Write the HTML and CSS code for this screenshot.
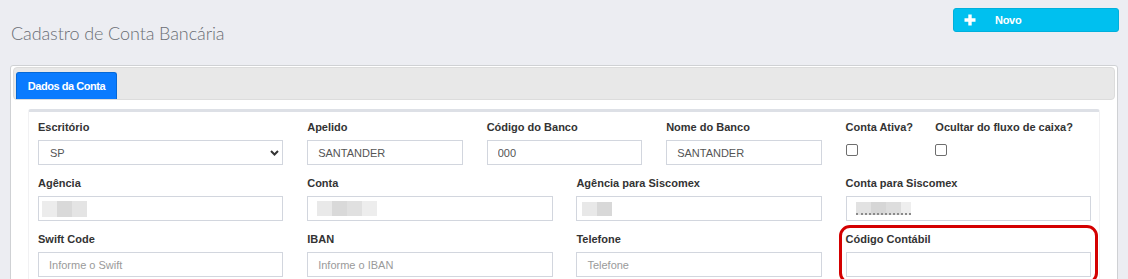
FILE: index.html
```html
<!DOCTYPE html>
<html lang="pt-BR">
<head>
<meta charset="utf-8">
<title>Cadastro de Conta Bancária</title>
<link rel="stylesheet" href="styles.css">
</head>
<body>
<header class="page-header">
  <h1 class="page-title">Cadastro de Conta Bancária</h1>
  <button class="btn-novo" type="button">
    <svg class="btn-icon" width="12" height="12" viewBox="0 0 12 12" aria-hidden="true"><path d="M6 0.5V11.5M0.5 6H11.5" stroke="#fff" stroke-width="3.4"/></svg>
    <span class="btn-label">Novo</span>
  </button>
</header>

<section class="panel">
  <nav class="tabbar">
    <a class="tab tab-active" href="#">Dados da Conta</a>
  </nav>
  <div class="box">
    <form class="form-grid">
      <div class="field span-3">
        <label class="lbl">Escritório</label>
        <div class="select-wrap">
          <select class="ctl select"><option>SP</option></select>
          <svg class="chev" width="9" height="6" viewBox="0 0 9 6" aria-hidden="true"><path d="M1 1L4.5 4.5L8 1" fill="none" stroke="#333" stroke-width="2"/></svg>
        </div>
      </div>
      <div class="field span-2">
        <label class="lbl">Apelido</label>
        <input class="ctl" value="SANTANDER">
      </div>
      <div class="field span-2">
        <label class="lbl">Código do Banco</label>
        <input class="ctl" value="000">
      </div>
      <div class="field span-2">
        <label class="lbl">Nome do Banco</label>
        <input class="ctl" value="SANTANDER">
      </div>
      <div class="field span-1">
        <label class="lbl">Conta Ativa?</label>
        <input class="chk" type="checkbox">
      </div>
      <div class="field span-2">
        <label class="lbl">Ocultar do fluxo de caixa?</label>
        <input class="chk" type="checkbox">
      </div>

      <div class="field span-3">
        <label class="lbl">Agência</label>
        <div class="ctl masked"><span class="mosaic m-ag"></span></div>
      </div>
      <div class="field span-3">
        <label class="lbl">Conta</label>
        <div class="ctl masked"><span class="mosaic m-conta"></span></div>
      </div>
      <div class="field span-3">
        <label class="lbl">Agência para Siscomex</label>
        <div class="ctl masked"><span class="mosaic m-agsis"></span></div>
      </div>
      <div class="field span-3">
        <label class="lbl">Conta para Siscomex</label>
        <div class="ctl masked"><span class="mosaic m-contasis"></span></div>
      </div>

      <div class="field span-3">
        <label class="lbl">Swift Code</label>
        <input class="ctl" placeholder="Informe o Swift">
      </div>
      <div class="field span-3">
        <label class="lbl">IBAN</label>
        <input class="ctl" placeholder="Informe o IBAN">
      </div>
      <div class="field span-3">
        <label class="lbl">Telefone</label>
        <input class="ctl" placeholder="Telefone">
      </div>
      <div class="field span-3 highlight">
        <label class="lbl">Código Contábil</label>
        <input class="ctl">
      </div>
    </form>
  </div>
</section>
</body>
</html>
```

FILE: styles.css
```css
* { box-sizing: border-box; }

html, body {
  margin: 0;
  padding: 0;
  background: #ecedf2;
  font-family: "Liberation Sans", Arial, sans-serif;
  overflow: hidden;
}

.page-header {
  display: flex;
  justify-content: space-between;
  align-items: flex-start;
  padding: 8px 9px 0 11px;
}

.page-title {
  margin: 13px 0 0;
  font-family: Lato, "Open Sans", sans-serif;
  font-weight: 300;
  font-size: 18px;
  line-height: 24px;
  letter-spacing: -0.1px;
  color: #6a6e75;
}

.btn-novo {
  display: flex;
  align-items: center;
  width: 166px;
  height: 24px;
  padding: 0 0 0 10px;
  background: #00c0ef;
  border: 1px solid #00b0dc;
  border-radius: 3px;
  color: #fff;
  font-family: "Liberation Sans", Arial, sans-serif;
  font-size: 11px;
  cursor: pointer;
}

.btn-icon { display: block; }

.btn-label {
  margin-left: 19px;
  font-weight: bold;
  letter-spacing: -0.3px;
}

.panel {
  margin: 20px 10px 0 10px;
  background: #fff;
  border: 1px solid #cfd1d4;
  border-radius: 3px;
  padding: 1px 2px 0;
}

.tabbar {
  display: flex;
  background: #e8e8e8;
  border: 1px solid #dcdcdc;
  border-radius: 4px;
  padding: 4px 2px 0;
  height: 33px;
}

.tab {
  display: flex;
  align-items: center;
  justify-content: center;
  height: 27px;
  padding: 0;
  font-size: 11px;
  font-weight: bold;
  letter-spacing: -0.45px;
  white-space: nowrap;
  color: #fff;
  text-decoration: none;
}

.tab-active {
  background: #0a7bff;
  border: 1px solid #0568d6;
  border-bottom: 0;
  border-radius: 3px 3px 0 0;
  width: 101px;
}

.box {
  margin: 9px 15px 0;
  border-top: 3px solid #dde0e6;
  border-left: 1px solid #f1f1f3;
  border-right: 1px solid #f1f1f3;
  border-radius: 3px 3px 0 0;
  padding: 8px 8px 20px 9px;
}

.form-grid {
  display: grid;
  grid-template-columns: repeat(12, 1fr);
  column-gap: 23.8px;
  row-gap: 11px;
}

.span-1 { grid-column: span 1; }
.span-2 { grid-column: span 2; }
.span-3 { grid-column: span 3; }

.field {
  display: flex;
  flex-direction: column;
  align-items: flex-start;
  min-width: 0;
}

.lbl {
  font-size: 11px;
  font-weight: bold;
  line-height: 15px;
  color: #333;
  margin-bottom: 5px;
  white-space: nowrap;
}

.ctl {
  width: 100%;
  height: 25px;
  margin: 0;
  padding: 0 10px;
  border: 1px solid #d2d6de;
  border-radius: 0;
  background: #fff;
  font-family: "Liberation Sans", Arial, sans-serif;
  font-size: 11px;
  color: #555;
  outline: none;
}

.ctl::placeholder { color: #9a9a9a; }

.select-wrap {
  position: relative;
  width: 100%;
}

.select {
  appearance: none;
  -webkit-appearance: none;
  padding-left: 11px;
  display: block;
}

.chev {
  position: absolute;
  right: 4px;
  top: 10px;
}

.chk {
  appearance: none;
  -webkit-appearance: none;
  width: 12px;
  height: 12px;
  margin: 4px 0 0;
  border: 1px solid #6e6e6e;
  border-radius: 2px;
  background: #fff;
}

.masked {
  display: flex;
  align-items: center;
  padding: 0 0 0 2px;
}

.mosaic {
  display: block;
  height: 16px;
}

.m-ag {
  width: 45px;
  margin-left: 1px;
  background: linear-gradient(90deg, #ececec 0 15px, #d9d9d9 15px 30px, #e4e4e4 30px 45px);
}

.m-conta {
  width: 60px;
  margin-left: 7px;
  height: 15px;
  background: linear-gradient(90deg, #e9e9e9 0 15px, #d9d9d9 15px 30px, #e0e0e0 30px 45px, #ededed 45px 60px);
}

.m-agsis {
  width: 30px;
  margin-left: 3px;
  height: 14px;
  background: linear-gradient(90deg, #e8e8e8 0 15px, #d8d8d8 15px 30px);
}

.m-contasis {
  width: 55px;
  margin-left: 7px;
  height: 13px;
  background: linear-gradient(90deg, #e2e2e2 0 15px, #d6d6d6 15px 30px, #dddddd 30px 45px, #eeeeee 45px 55px);
  border-bottom: 2px dotted #8a8a8a;
}

.highlight {
  outline: 3px solid #d40000;
  outline-offset: 4px;
  border-radius: 4px;
}
```
